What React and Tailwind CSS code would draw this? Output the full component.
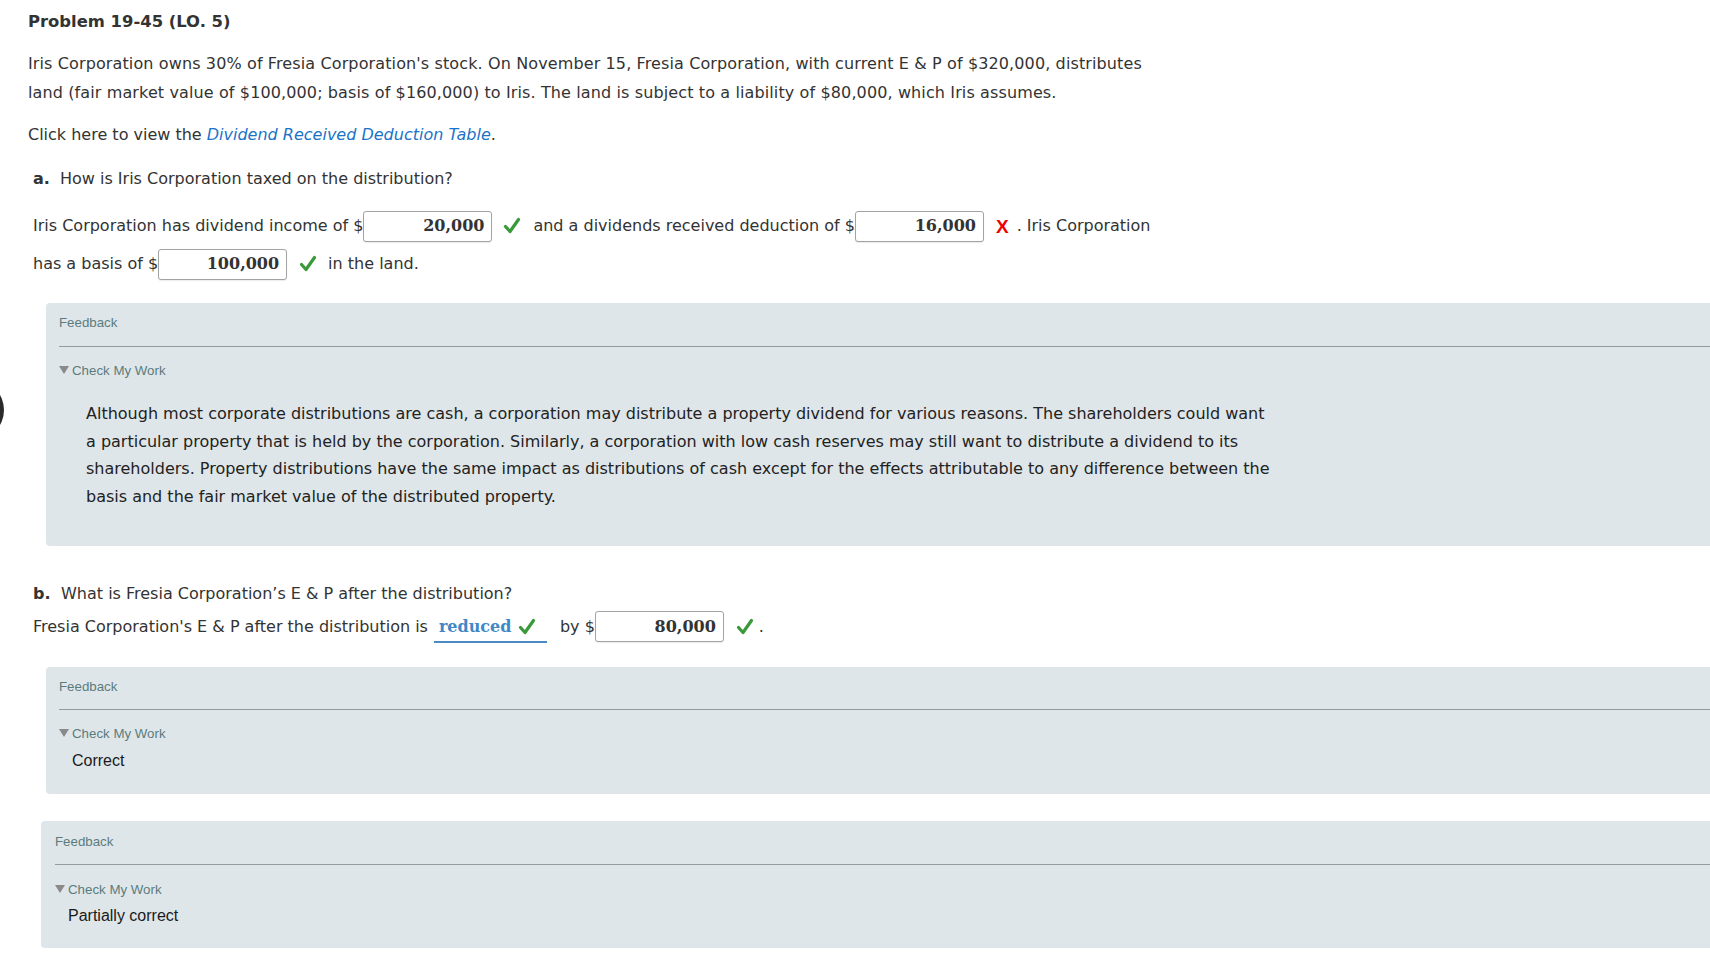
import React from "react";

const Check = ({ className = "" }) => (
  <svg width="18" height="18" viewBox="0 0 18 18" className={"shrink-0 " + className}>
    <path d="M2.5 9.5 L7 14.5 L15.5 2.5" fill="none" stroke="#3a9a3a" strokeWidth="3.2" strokeLinecap="round" strokeLinejoin="round" />
  </svg>
);

const Field = ({ v }) => (
  <span className="inline-flex items-center justify-end h-[31px] w-[129px] border border-[#a3a3a3] rounded-[3px] bg-white pr-[7px] font-['DejaVu_Serif',serif] font-bold text-[16px] text-[#333] shadow-[0_1px_1px_rgba(0,0,0,0.08)] shrink-0">
    {v}
  </span>
);

const Tri = () => (
  <span className="inline-block w-0 h-0 border-l-[5px] border-r-[5px] border-t-[8px] border-l-transparent border-r-transparent border-t-[#8a8a8a] mr-[3px] translate-y-[-1px]"></span>
);

export default function App() {
  return (
    <div className="relative min-h-[960px] bg-white pt-[8px] pl-[28px] font-['DejaVu_Sans',Verdana,sans-serif] text-[16px] text-[#333] overflow-hidden">
      <div className="absolute left-[-56px] top-[380px] w-[60px] h-[60px] rounded-full bg-[#2a2a2a]"></div>

      <div className="font-bold leading-[28px] text-[16.4px]">Problem 19-45 (LO. 5)</div>

      <p className="mt-[13px] leading-[29px] whitespace-nowrap tracking-[0.12px]">
        Iris Corporation owns 30% of Fresia Corporation's stock. On November 15, Fresia Corporation, with current E &amp; P of $320,000, distributes
        <br />
        land (fair market value of $100,000; basis of $160,000) to Iris. The land is subject to a liability of $80,000, which Iris assumes.
      </p>

      <p className="mt-[13px] leading-[29px]">
        Click here to view the <span className="italic text-[#1a73c8]">Dividend Received Deduction Table</span>.
      </p>

      <div className="ml-[5px]">
        <div className="mt-[15px] leading-[29px] flex">
          <span className="font-bold w-[27px]">a.</span>
          <span>How is Iris Corporation taxed on the distribution?</span>
        </div>

        <div className="mt-[14px] h-[38px] flex items-center whitespace-nowrap">
          <span>Iris Corporation has dividend income of $</span>
          <Field v="20,000" />
          <Check className="ml-[11px]" />
          <span className="ml-[12px]">and a dividends received deduction of $</span>
          <Field v="16,000" />
          <span className="ml-[12px] font-['Liberation_Sans',Arial,sans-serif] font-bold text-[19px] text-[#f00000] leading-none">X</span>
          <span className="ml-[8px]">. Iris Corporation</span>
        </div>
        <div className="h-[38px] flex items-center whitespace-nowrap">
          <span>has a basis of $</span>
          <Field v="100,000" />
          <Check className="ml-[12px]" />
          <span className="ml-[11px]">in the land.</span>
        </div>
      </div>

      <div className="mt-[20px] ml-[18px] bg-[#dfe6e9] rounded-l-[4px] pl-[13px] pt-[12px] pb-[35px] font-['Liberation_Sans',Arial,sans-serif]">
        <div className="text-[13.3px] leading-[16px] text-[#5b7c7d]">Feedback</div>
        <div className="mt-[15px] h-px bg-[#949c9f]"></div>
        <div className="mt-[16px] text-[13.3px] leading-[16px] text-[#5b7c7d] flex items-center">
          <Tri />
          <span>Check My Work</span>
        </div>
        <p className="mt-[21px] ml-[27px] font-['DejaVu_Sans',Verdana,sans-serif] text-[16px] leading-[27.7px] text-[#222] whitespace-nowrap">
          Although most corporate distributions are cash, a corporation may distribute a property dividend for various reasons. The shareholders could want
          <br />
          a particular property that is held by the corporation. Similarly, a corporation with low cash reserves may still want to distribute a dividend to its
          <br />
          shareholders. Property distributions have the same impact as distributions of cash except for the effects attributable to any difference between the
          <br />
          basis and the fair market value of the distributed property.
        </p>
      </div>

      <div className="ml-[5px]">
        <div className="mt-[34px] leading-[28px] flex">
          <span className="font-bold w-[28px]">b.</span>
          <span>What is Fresia Corporation’s E &amp; P after the distribution?</span>
        </div>
        <div className="h-[38px] flex items-center whitespace-nowrap">
          <span>Fresia Corporation's E &amp; P after the distribution is</span>
          <span className="ml-[6px] w-[113px] h-[31px] flex items-center border-b-[2px] border-[#4a8ac6] pl-[5px] translate-y-[1px]">
            <span className="font-['DejaVu_Serif',serif] font-bold text-[#3f88c8] text-[16px]">reduced</span>
            <Check className="ml-[7px]" />
          </span>
          <span className="ml-[13px]">by $</span>
          <Field v="80,000" />
          <Check className="ml-[12px]" />
          <span className="ml-[5px]">.</span>
        </div>
      </div>

      <div className="mt-[21px] ml-[18px] bg-[#dfe6e9] rounded-l-[4px] pl-[13px] pt-[12px] pb-[23px] font-['Liberation_Sans',Arial,sans-serif]">
        <div className="text-[13.3px] leading-[16px] text-[#5b7c7d]">Feedback</div>
        <div className="mt-[14px] h-px bg-[#949c9f]"></div>
        <div className="mt-[16px] text-[13.3px] leading-[16px] text-[#5b7c7d] flex items-center">
          <Tri />
          <span>Check My Work</span>
        </div>
        <div className="mt-[9px] ml-[13px] text-[16px] leading-[20px] text-[#1a1a1a]">Correct</div>
      </div>

      <div className="mt-[27px] ml-[13px] bg-[#dfe6e9] rounded-l-[4px] pl-[14px] pt-[13px] pb-[22px] font-['Liberation_Sans',Arial,sans-serif]">
        <div className="text-[13.3px] leading-[16px] text-[#5b7c7d]">Feedback</div>
        <div className="mt-[14px] h-px bg-[#949c9f]"></div>
        <div className="mt-[17px] text-[13.3px] leading-[16px] text-[#5b7c7d] flex items-center">
          <Tri />
          <span>Check My Work</span>
        </div>
        <div className="mt-[8px] ml-[13px] text-[16px] leading-[20px] text-[#1a1a1a]">Partially correct</div>
      </div>
    </div>
  );
}
